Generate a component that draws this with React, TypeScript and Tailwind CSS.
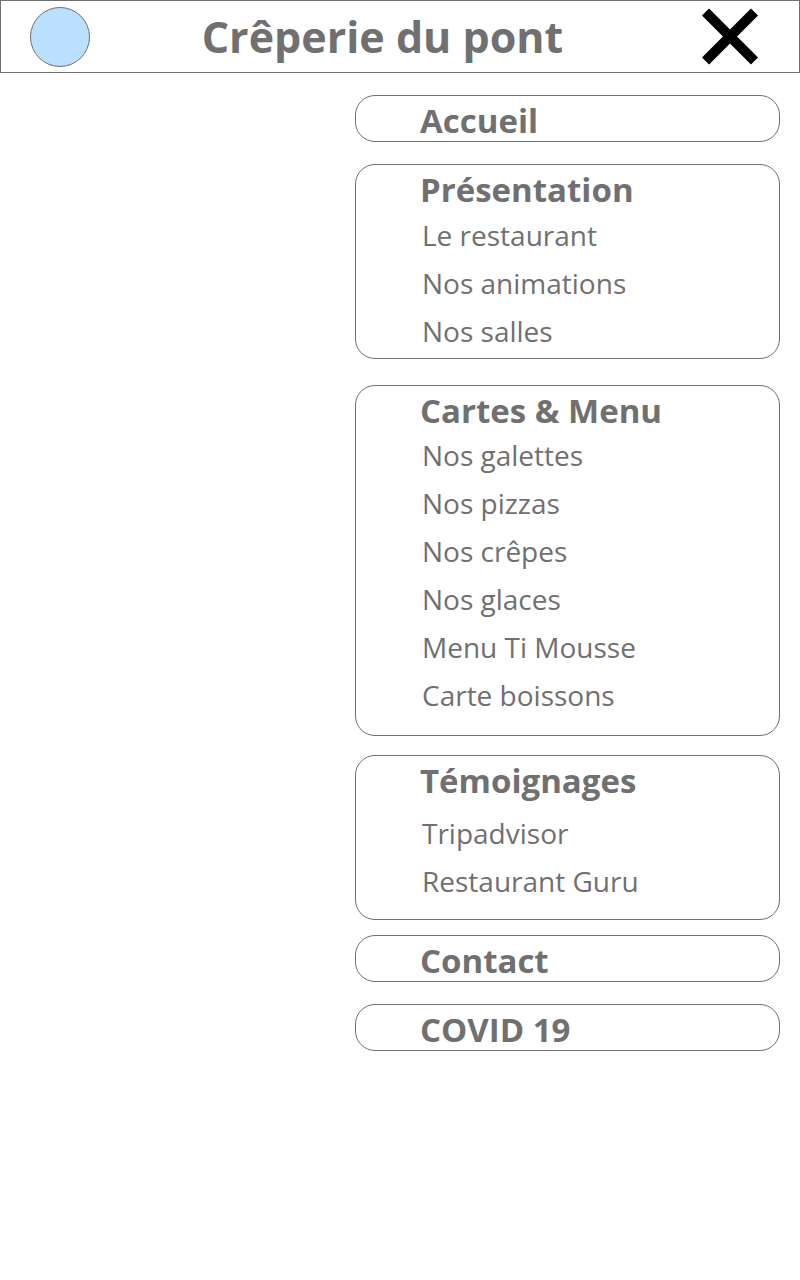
import React from "react";

type Section = {
  title: string;
  href: string;
  box: string;
  list?: string;
  links: string[];
};

const sections: Section[] = [
  { title: "Accueil", href: "#accueil", box: "mb-[22px]", links: [] },
  {
    title: "Présentation",
    href: "#presentation",
    box: "mb-[26px] pb-[3px]",
    list: "pt-px",
    links: ["Le restaurant", "Nos animations", "Nos salles"],
  },
  {
    title: "Cartes & Menu",
    href: "#cartes",
    box: "mb-[19px] pb-4",
    links: ["Nos galettes", "Nos pizzas", "Nos crêpes", "Nos glaces", "Menu Ti Mousse", "Carte boissons"],
  },
  {
    title: "Témoignages",
    href: "#temoignages",
    box: "mb-[15px] pb-[14px]",
    list: "pt-2",
    links: ["Tripadvisor", "Restaurant Guru"],
  },
  { title: "Contact", href: "#contact", box: "mb-[22px]", links: [] },
  { title: "COVID 19", href: "#covid", box: "", links: [] },
];

export default function App() {
  return (
    <div className="min-h-screen bg-white font-['Open_Sans','Noto_Sans',sans-serif] text-[#707070]">
      <header className="flex h-[73px] items-center border border-[#707070] pr-10 pl-[29px]">
        <a href="#accueil" aria-label="Accueil" className="size-[60px] shrink-0 rounded-full border border-[#707070] bg-[#bbdfff]" />
        <h1 className="flex-1 pr-[26px] text-center text-[43px] leading-[60px] font-bold whitespace-nowrap">Crêperie du pont</h1>
        <button type="button" aria-label="Fermer le menu" className="shrink-0 text-black">
          <svg viewBox="0 0 58 58" className="size-[58px]" fill="none" stroke="currentColor" strokeWidth="10">
            <path d="M4.5 4 53.5 53M53.5 4 4.5 53" />
          </svg>
        </button>
      </header>
      <nav className="mt-[22px] mr-5 ml-auto w-[425px] max-w-full">
        {sections.map((s) => (
          <section key={s.title} className={`rounded-[20px] border border-[#707070] pl-16 ${s.box}`}>
            <h2 className="pt-1 text-[33px] leading-[41px] font-bold">
              <a href={s.href}>{s.title}</a>
            </h2>
            {s.links.length > 0 && (
              <ul className={s.list}>
                {s.links.map((l) => (
                  <li key={l} className="pl-[2px] text-[28px] leading-[48px]">
                    <a href={s.href}>{l}</a>
                  </li>
                ))}
              </ul>
            )}
          </section>
        ))}
      </nav>
    </div>
  );
}
